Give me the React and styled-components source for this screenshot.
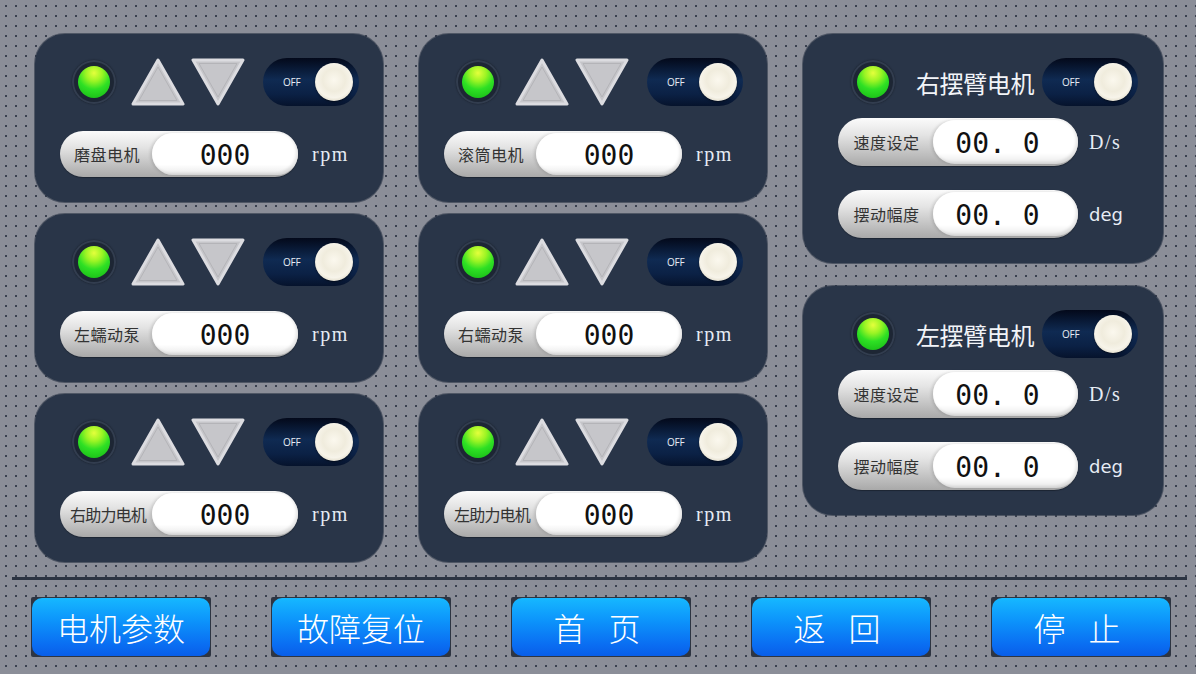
import React from "react";
import styled, { createGlobalStyle } from "styled-components";

const GlobalStyle = createGlobalStyle`
  html, body {
    margin: 0;
    padding: 0;
  }
  body {
    width: 1196px;
    height: 674px;
    overflow: hidden;
    background-color: #8b8e98;
    background-image: radial-gradient(circle, #3a4150 0.8px, transparent 1.3px);
    background-size: 10px 10px;
    background-position: 1px 1px;
    font-family: "Noto Sans CJK SC", "Noto Sans", sans-serif;
  }
`;

const Screen = styled.div`
  width: 1196px;
  height: 674px;
  display: flex;
  flex-direction: column;
`;

const Main = styled.div`
  display: flex;
  gap: 36px;
  padding: 34px 0 0 35px;
`;

const MotorGrid = styled.div`
  display: grid;
  grid-template-columns: 348px 348px;
  grid-template-rows: 168px 168px 168px;
  gap: 12px 36px;
`;

const SideColumn = styled.div`
  display: flex;
  flex-direction: column;
  gap: 23px;
  width: 360px;
`;

const Panel = styled.div`
  background: #293548;
  border-radius: 30px;
  display: flex;
  flex-direction: column;
  padding: ${(p) => (p.$side ? "24px 0 0 35px" : "24px 0 0 25px")};
  height: ${(p) => (p.$side ? "229px" : "auto")};
  box-sizing: border-box;
  box-shadow: 0 0 0 1px rgba(40, 50, 66, 0.6);
`;

const TopRow = styled.div`
  display: flex;
  align-items: center;
  height: 48px;
  padding-left: ${(p) => p.$indent || 0}px;
`;

const LedRing = styled.div`
  width: 44px;
  height: 44px;
  border-radius: 50%;
  background: #1d2634;
  box-shadow: inset 0 0 0 2px #323d4f, 0 0 2px rgba(0, 0, 0, 0.4);
  display: flex;
  align-items: center;
  justify-content: center;
  flex-shrink: 0;
`;

const LedLight = styled.div`
  width: 32px;
  height: 32px;
  border-radius: 50%;
  background: radial-gradient(
    circle at 50% 22%,
    #e4ff3c 0%,
    #9af424 28%,
    #2ee024 55%,
    #14b414 100%
  );
`;

const Arrow = styled.svg`
  width: 54px;
  height: 48px;
  flex-shrink: 0;
  margin-left: ${(p) => p.$gap}px;
`;

const Toggle = styled.div`
  width: 96px;
  height: 48px;
  border-radius: 24px;
  background: linear-gradient(180deg, #03091a 0%, #0f2a52 45%, #0b2145 75%, #06132c 100%);
  display: flex;
  align-items: center;
  justify-content: space-between;
  padding: 0 6px 0 20px;
  box-sizing: border-box;
  flex-shrink: 0;
  margin-left: ${(p) => p.$gap}px;
`;

const ToggleLabel = styled.span`
  font-family: "Open Sans", "Liberation Sans", sans-serif;
  font-size: 10px;
  color: #e8ecf4;
  letter-spacing: -0.2px;
`;

const Knob = styled.div`
  width: 38px;
  height: 38px;
  border-radius: 50%;
  background: radial-gradient(circle at 50% 45%, #fbf8ee 0%, #f0ecdd 40%, #f7f4ea 62%, #d8d1bb 85%, #bbb49e 100%);
  box-shadow: 0 1px 2px rgba(0, 0, 0, 0.5);
`;

const Title = styled.span`
  font-size: 24px;
  color: #f2f4f8;
  margin-left: 21px;
  width: 126px;
  white-space: nowrap;
  letter-spacing: -0.4px;
`;

const FieldRow = styled.div`
  display: flex;
  align-items: center;
  margin-top: ${(p) => p.$top}px;
`;

const Field = styled.div`
  width: ${(p) => (p.$wide ? 240 : 238)}px;
  height: ${(p) => (p.$wide ? 48 : 46)}px;
  border-radius: 24px;
  background: linear-gradient(180deg, #fbfbfb 0%, #e4e4e4 35%, #c4c4c4 70%, #a9a9a9 100%);
  display: flex;
  align-items: stretch;
  box-shadow: 0 1px 1px rgba(0, 0, 0, 0.3);
  flex-shrink: 0;
`;

const FieldLabel = styled.span`
  width: ${(p) => (p.$wide ? 95 : 92)}px;
  flex-shrink: 0;
  display: flex;
  align-items: center;
  justify-content: center;
  font-size: 16px;
  color: #333333;
  white-space: nowrap;
  letter-spacing: ${(p) => (p.$long ? "-0.8px" : "0.5px")};
  padding-left: ${(p) => (p.$long ? 4 : 2)}px;
  box-sizing: border-box;
`;

const FieldValue = styled.span`
  flex: 1;
  margin: 2px 0;
  border-radius: 22px;
  background: linear-gradient(180deg, #ffffff 0%, #ffffff 75%, #e9e9e9 100%);
  box-shadow: -2px 0 3px rgba(0, 0, 0, 0.12), inset -2px -2px 3px rgba(0, 0, 0, 0.1);
  display: flex;
  align-items: center;
  justify-content: center;
  font-family: "DejaVu Sans Mono", "Liberation Mono", monospace;
  font-size: 28px;
  font-weight: 300;
  color: #111111;
  white-space: pre;
  padding-right: ${(p) => (p.$wide ? 16 : 0)}px;
  padding-top: 2px;
  box-sizing: border-box;
`;

const Unit = styled.span`
  margin-left: ${(p) => (p.$wide ? 11 : 14)}px;
  font-family: ${(p) =>
    p.$sans
      ? '"DejaVu Sans", "Liberation Sans", sans-serif'
      : '"Liberation Serif", "DejaVu Serif", serif'};
  font-size: ${(p) => (p.$sans ? 18 : 20)}px;
  color: #e6ecf4;
  letter-spacing: ${(p) => (p.$sans ? "0" : "1.5px")};
`;

const Divider = styled.div`
  margin: 15px 0 0 12px;
  width: 1175px;
  height: 3px;
  background: #2c3442;
`;

const ButtonRow = styled.div`
  display: flex;
  gap: 60px;
  padding: 17px 0 0 31px;
`;

const ButtonFrame = styled.div`
  width: 180px;
  height: 60px;
  background: #2e3542;
  border-radius: 2px;
  padding: 1px;
  box-sizing: border-box;
`;

const Button = styled.button`
  width: 100%;
  height: 100%;
  border: none;
  border-radius: 10px;
  background: linear-gradient(180deg, #16b8ff 0%, #0c93fb 40%, #0a6ef2 80%, #095ee8 100%);
  color: #ffffff;
  font-family: "Noto Sans CJK SC", "Noto Sans", sans-serif;
  font-size: 32px;
  font-weight: 300;
  padding: 0;
  cursor: pointer;
  letter-spacing: ${(p) => p.$spacing || 0}px;
  white-space: pre;
`;

function UpArrow({ gap }) {
  return (
    <Arrow $gap={gap} viewBox="0 0 54 48">
      <polygon points="27,2 52,46 2,46" fill="#c6c6ca" stroke="#dcdce0" strokeWidth="3" strokeLinejoin="round" />
      <polygon points="27,9 46,42.5 8,42.5" fill="none" stroke="#b4b4b8" strokeWidth="1" />
    </Arrow>
  );
}

function DownArrow({ gap }) {
  return (
    <Arrow $gap={gap} viewBox="0 0 54 48">
      <polygon points="2,2 52,2 27,46" fill="#c6c6ca" stroke="#dcdce0" strokeWidth="3" strokeLinejoin="round" />
      <polygon points="8,5.5 46,5.5 27,39" fill="none" stroke="#b4b4b8" strokeWidth="1" />
    </Arrow>
  );
}

function Switch({ gap }) {
  return (
    <Toggle $gap={gap}>
      <ToggleLabel>OFF</ToggleLabel>
      <Knob />
    </Toggle>
  );
}

function Led() {
  return (
    <LedRing>
      <LedLight />
    </LedRing>
  );
}

function MotorCard({ name }) {
  return (
    <Panel>
      <TopRow $indent={12}>
        <Led />
        <UpArrow gap={15} />
        <DownArrow gap={6} />
        <Switch gap={18} />
      </TopRow>
      <FieldRow $top={25}>
        <Field>
          <FieldLabel $long={name.length > 4}>{name}</FieldLabel>
          <FieldValue>000</FieldValue>
        </Field>
        <Unit>rpm</Unit>
      </FieldRow>
    </Panel>
  );
}

function ArmCard({ title }) {
  return (
    <Panel $side>
      <TopRow $indent={13}>
        <Led />
        <Title>{title}</Title>
        <Switch gap={0} />
      </TopRow>
      <FieldRow $top={12}>
        <Field $wide>
          <FieldLabel $wide>速度设定</FieldLabel>
          <FieldValue $wide>00. 0</FieldValue>
        </Field>
        <Unit $wide>D/s</Unit>
      </FieldRow>
      <FieldRow $top={24}>
        <Field $wide>
          <FieldLabel $wide>摆动幅度</FieldLabel>
          <FieldValue $wide>00. 0</FieldValue>
        </Field>
        <Unit $wide $sans>
          deg
        </Unit>
      </FieldRow>
    </Panel>
  );
}

const motors = ["磨盘电机", "滚筒电机", "左蠕动泵", "右蠕动泵", "右助力电机", "左助力电机"];

const buttons = [
  { text: "电机参数", spacing: 0 },
  { text: "故障复位", spacing: 0 },
  { text: "首 页", spacing: 8 },
  { text: "返 回", spacing: 8 },
  { text: "停 止", spacing: 8 },
];

export default function App() {
  return (
    <Screen>
      <GlobalStyle />
      <Main>
        <MotorGrid>
          {motors.map((m) => (
            <MotorCard key={m} name={m} />
          ))}
        </MotorGrid>
        <SideColumn>
          <ArmCard title="右摆臂电机" />
          <ArmCard title="左摆臂电机" />
        </SideColumn>
      </Main>
      <Divider />
      <ButtonRow>
        {buttons.map((b) => (
          <ButtonFrame key={b.text}>
            <Button $spacing={b.spacing}>{b.text}</Button>
          </ButtonFrame>
        ))}
      </ButtonRow>
    </Screen>
  );
}
